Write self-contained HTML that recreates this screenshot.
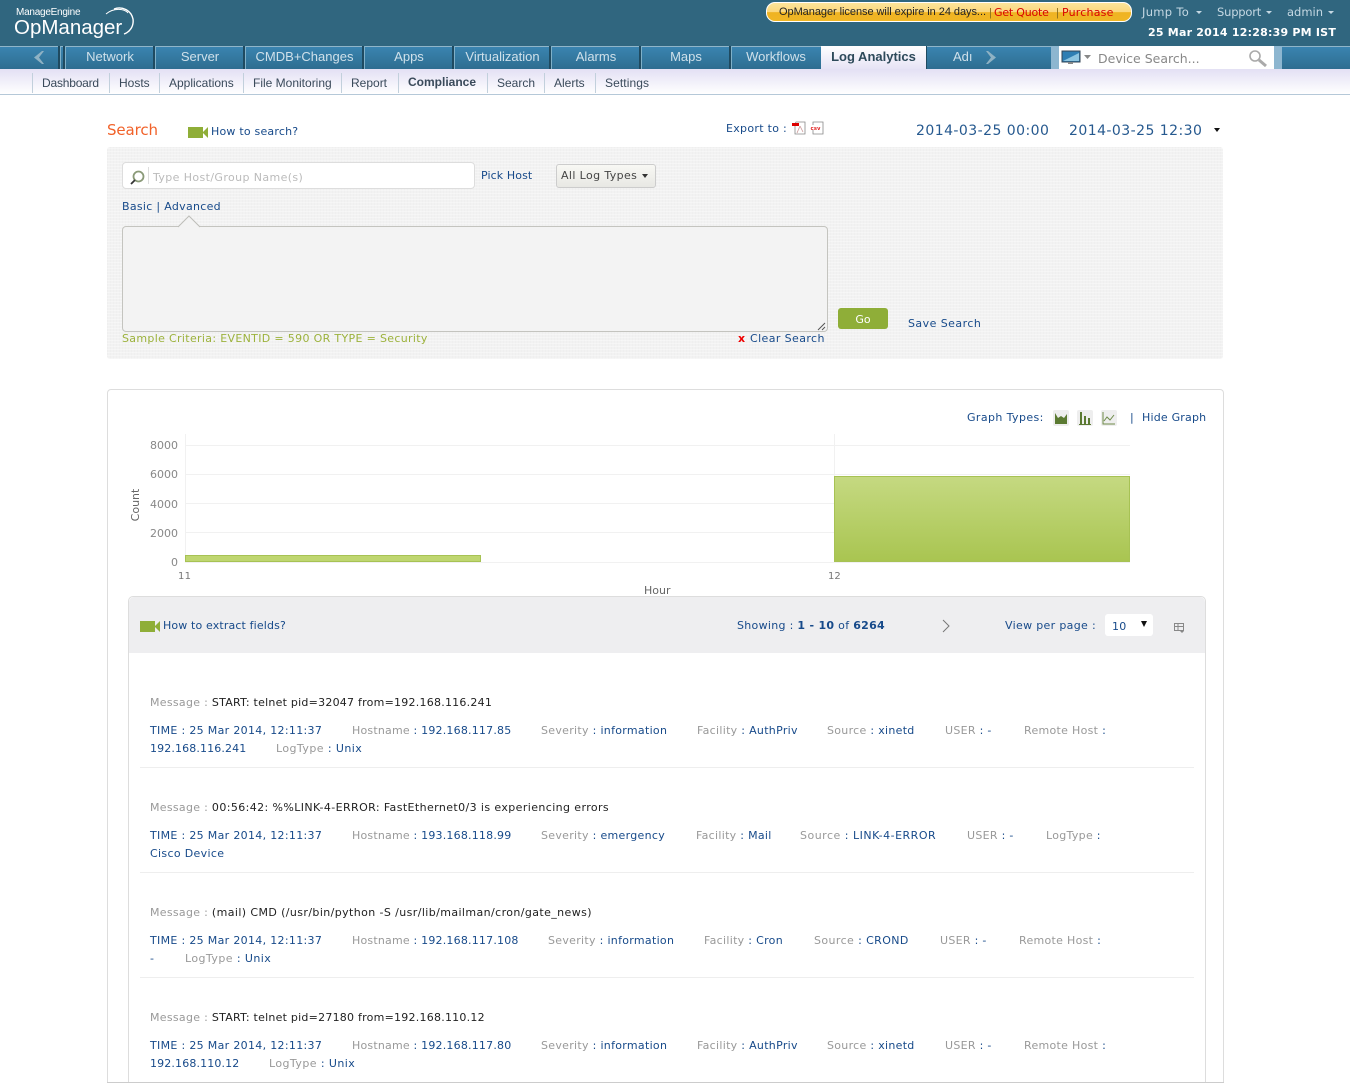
<!DOCTYPE html>
<html><head><meta charset="utf-8"><title>OpManager - Log Analytics</title>
<style>
html,body{margin:0;padding:0;background:#fff}
#p{position:relative;width:1350px;height:1090px;overflow:hidden;background:#fff;font-family:"DejaVu Sans","Liberation Sans",sans-serif;font-size:11px;color:#174a8a}
#p div,#p span.a{position:absolute}
.t{white-space:nowrap;line-height:14px;height:14px;margin-top:1px;letter-spacing:.3px}
.z{letter-spacing:0}
.h{letter-spacing:.2px}
.n{font-family:"Liberation Sans",sans-serif;font-size:13px;color:#cfe0ea;text-align:center;top:49px;line-height:16px;white-space:nowrap}
.s{font-family:"Liberation Sans",sans-serif;font-size:12px;color:#3a4a5a;top:76px;line-height:14px;white-space:nowrap}
.sep{top:46px;width:2px;height:23px;background:#1f4a60;border-right:1px solid #7fb0c8}
.ss{top:73px;width:1px;height:20px;background:#c2d0dc}
.g{color:#999}
.m{color:#222}
.gl{background:#f1f1f1;height:1px}
.ax{color:#888;font-size:11px;text-align:right;width:40px;left:138px;letter-spacing:0}
.cam{width:15px;height:11px;background:#8fae38}
.cam:after{content:"";position:absolute;left:15px;top:0;border-right:5px solid #8fae38;border-top:5px solid transparent;border-bottom:5px solid transparent;height:1px}
.rowl{left:140px;width:1054px;height:1px;background:#eee}
</style></head><body><div id="p">

<div style="left:0;top:0;width:1350px;height:46px;background:#30667f"></div>
<div class="t z" style="left:16px;top:5px;font-family:'Liberation Sans',sans-serif;font-size:10px;color:#fff;letter-spacing:-.25px">ManageEngine</div>
<div class="t z" style="left:14px;top:15px;font-family:'Liberation Sans',sans-serif;font-size:20.5px;color:#fff;line-height:24px;height:24px">OpManager</div>
<svg style="position:absolute;left:100px;top:5px" width="38" height="34" fill="none" stroke="#fff"><path d="M6 9C13 3 24 3 28 8" stroke-width="1"/><path d="M14 4C22 1 31 5 33 14C34 21 30 27 24 29" stroke-width="1.4"/></svg>

<div style="left:766px;top:2px;width:364px;height:18px;border:1px solid #fff;border-radius:9px;background:linear-gradient(#fde49a 0,#fbd77c 50%,#efb322 52%,#f0b625 100%)"></div>
<div class="t" style="left:779px;top:4px;font-family:'Liberation Sans',sans-serif;font-size:11px;color:#222;letter-spacing:-.05px">OpManager license will expire in 24 days...</div>
<div class="t z" style="left:989px;top:5px;color:#8a6d1a;font-family:'Liberation Sans',sans-serif">|</div>
<div class="t" style="left:994px;top:5px;color:#d90000;font-size:11px;letter-spacing:-.2px">Get Quote</div>
<div class="t z" style="left:1056px;top:5px;color:#8a6d1a;font-family:'Liberation Sans',sans-serif">|</div>
<div class="t" style="left:1062px;top:5px;color:#d90000;font-size:11px;letter-spacing:.2px">Purchase</div>

<div class="t" style="left:1142px;top:4px;color:#c5d8e3;font-family:'DejaVu Sans';font-size:11.5px">Jump To</div>
<div style="left:1196px;top:11px;border:3px solid transparent;border-top:3px solid #c5d8e3"></div>
<div class="t" style="left:1217px;top:4px;color:#c5d8e3;font-size:11.5px;letter-spacing:-.2px">Support</div>
<div style="left:1266px;top:11px;border:3px solid transparent;border-top:3px solid #c5d8e3"></div>
<div class="t z" style="left:1287px;top:4px;color:#c5d8e3;font-size:11.5px">admin</div>
<div style="left:1328px;top:11px;border:3px solid transparent;border-top:3px solid #c5d8e3"></div>
<div class="t" style="left:1148px;top:25px;color:#fff;font-weight:bold;font-size:11px;letter-spacing:.22px">25 Mar 2014 12:28:39 PM IST</div>

<div style="left:0;top:46px;width:1350px;height:23px;background:linear-gradient(#3a84b0,#2e6d90);border-top:1px solid #8fb5c9;box-sizing:border-box"></div>
<svg style="position:absolute;left:31px;top:50px" width="14" height="15"><path d="M11 1L3 7.5L11 14L13 14L8 7.5L13 1Z" fill="#8fb2c4"/></svg>
<div class="sep" style="left:58px"></div><div class="sep" style="left:63px"></div>
<div class="sep" style="left:153px"></div><div class="sep" style="left:243px"></div><div class="sep" style="left:362px"></div><div class="sep" style="left:452px"></div><div class="sep" style="left:549px"></div><div class="sep" style="left:639px"></div><div class="sep" style="left:729px"></div>
<div class="n" style="left:66px;width:88px">Network</div>
<div class="n" style="left:156px;width:88px">Server</div>
<div class="n" style="left:246px;width:117px">CMDB+Changes</div>
<div class="n" style="left:365px;width:88px">Apps</div>
<div class="n" style="left:455px;width:95px">Virtualization</div>
<div class="n" style="left:552px;width:88px">Alarms</div>
<div class="n" style="left:642px;width:88px">Maps</div>
<div class="n" style="left:732px;width:88px">Workflows</div>
<div style="left:821px;top:46px;width:105px;height:23px;background:linear-gradient(#fff,#e6e3f5);border-right:1px solid #1f4a60"></div>
<div class="n" style="left:821px;width:105px;color:#2d4a5a;font-weight:bold">Log Analytics</div>
<div class="n" style="left:953px;width:20px;text-align:left;overflow:hidden">Adı</div>
<svg style="position:absolute;left:985px;top:50px" width="14" height="15"><path d="M3 1L11 7.5L3 14L1 14L6 7.5L1 1Z" fill="#8fb2c4"/></svg>
<div style="left:1051px;top:46px;width:8px;height:23px;background:#8db6d0"></div>
<div style="left:1059px;top:46px;width:215px;height:23px;background:#fff"></div>
<div style="left:1274px;top:46px;width:8px;height:23px;background:#8db6d0"></div>
<svg style="position:absolute;left:1061px;top:50px" width="32" height="16"><rect x="1" y="1" width="18" height="11" fill="#2e7eb3" stroke="#345"/><path d="M2 11L18 3V11Z" fill="#8cc4e0"/><rect x="7" y="12" width="5" height="2" fill="#888"/><path d="M23 5H30L26.500 9Z" fill="#888"/></svg>
<div class="t z" style="left:1098px;top:51px;color:#888;font-size:12.5px">Device Search...</div>
<svg style="position:absolute;left:1248px;top:49px" width="20" height="18" fill="none" stroke="#aaa"><circle cx="7" cy="7" r="5" stroke-width="1.6"/><path d="M11 11L18 17" stroke-width="3"/></svg>

<div style="left:0;top:69px;width:1350px;height:25px;background:linear-gradient(#e3e0f4,#fff)"></div>
<div style="left:0;top:94px;width:1350px;height:1px;background:#b5c8d8"></div>
<div class="ss" style="left:32px"></div><div class="ss" style="left:109px"></div><div class="ss" style="left:159px"></div><div class="ss" style="left:243px"></div><div class="ss" style="left:341px"></div><div class="ss" style="left:398px"></div><div class="ss" style="left:487px"></div><div class="ss" style="left:544px"></div><div class="ss" style="left:595px"></div>
<div class="s" style="left:42px;letter-spacing:-.2px">Dashboard</div>
<div class="s" style="left:119px">Hosts</div>
<div class="s" style="left:169px">Applications</div>
<div class="s" style="left:253px">File Monitoring</div>
<div class="s" style="left:351px">Report</div>
<div class="s" style="left:408px;font-weight:bold;top:75px">Compliance</div>
<div class="s" style="left:497px">Search</div>
<div class="s" style="left:554px">Alerts</div>
<div class="s" style="left:605px;letter-spacing:.1px">Settings</div>

<div class="t z" style="left:107px;top:120px;color:#f1622a;font-size:15px;line-height:18px;height:18px;letter-spacing:-.1px">Search</div>
<div class="cam" style="left:188px;top:127px"></div>
<div class="t" style="left:211px;top:124px;letter-spacing:.21px">How to search?</div>
<div class="t" style="left:726px;top:121px">Export to :</div>
<svg style="position:absolute;left:792px;top:121px" width="34" height="14"><path d="M4 1H13V13H3V3Z" fill="#fff" stroke="#888" stroke-width=".8"/><rect x="0" y="2" width="7" height="3" fill="#d00"/><path d="M8 5L5 12M8 5L11 11" stroke="#c99" fill="none" stroke-width=".8"/><path d="M21 1H31V13H21Z" fill="#fff" stroke="#888" stroke-width=".8"/><rect x="18" y="4" width="11" height="5" fill="#fff"/><text x="18.500" y="9" font-size="5.500" font-family="Liberation Mono" font-weight="bold" fill="#d00">csv</text></svg>
<div class="t" style="left:916px;top:122px;font-size:14px;line-height:16px;height:16px;color:#26598f;letter-spacing:.45px">2014-03-25 00:00</div>
<div class="t" style="left:1069px;top:122px;font-size:14px;line-height:16px;height:16px;color:#26598f;letter-spacing:.45px">2014-03-25 12:30</div>
<div style="left:1214px;top:128px;border:3.500px solid transparent;border-top:4px solid #111"></div>

<div style="left:107px;top:147px;width:1116px;height:212px;background-color:#f2f2f2;background-image:repeating-linear-gradient(0deg,rgba(255,255,255,.35) 0 1px,transparent 1px 3px),repeating-linear-gradient(90deg,rgba(0,0,0,.012) 0 1px,transparent 1px 3px);border-radius:3px"></div>
<div style="left:122px;top:162px;width:351px;height:25px;background:#fff;border:1px solid #ddd;border-radius:4px"></div>
<svg style="position:absolute;left:129px;top:169px" width="18" height="18" fill="none"><circle cx="9.500" cy="7.500" r="5" stroke="#8a9a78" stroke-width="1.800"/><path d="M6 11L2 15" stroke="#333" stroke-width="1.800"/></svg>
<div style="left:148px;top:167px;width:1px;height:17px;background:#ddd"></div>
<div class="t" style="left:153px;top:170px;color:#bbb;letter-spacing:.39px">Type Host/Group Name(s)</div>
<div class="t" style="left:481px;top:168px;letter-spacing:.1px">Pick Host</div>
<div style="left:556px;top:164px;width:98px;height:22px;border:1px solid #ccc;border-radius:3px;background:linear-gradient(#f8f8f4,#e8e8e4)"></div>
<div class="t" style="left:561px;top:168px;color:#444;letter-spacing:.38px">All Log Types</div>
<div style="left:642px;top:174px;border:3.500px solid transparent;border-top:4px solid #333"></div>
<div class="t" style="left:122px;top:199px">Basic | Advanced</div>

<div style="left:122px;top:226px;width:704px;height:104px;background:#f3f3f3;border:1px solid #c4c4bf;border-radius:4px"></div>
<svg style="position:absolute;left:178px;top:215px" width="22" height="13"><path d="M0 12L11 1L22 12" fill="#f3f3f3" stroke="#bdbdb8"/><rect x="1" y="12" width="20" height="1" fill="#f3f3f3"/></svg>
<svg style="position:absolute;left:817px;top:322px" width="9" height="9" stroke="#555" fill="none"><path d="M1 8L8 1M5 8L8 5"/></svg>
<div class="t" style="left:122px;top:331px;color:#9cb23c;letter-spacing:.33px">Sample Criteria: EVENTID = 590 OR TYPE = Security</div>
<div class="t" style="left:738px;top:331px;color:#e00;font-weight:bold">x</div>
<div class="t" style="left:750px;top:331px;letter-spacing:.4px">Clear Search</div>
<div style="left:838px;top:308px;width:50px;height:21px;background:#8fae38;border-radius:3px;color:#fff;text-align:center;line-height:23px">Go</div>
<div class="t" style="left:908px;top:316px;letter-spacing:.45px">Save Search</div>

<div style="left:107px;top:389px;width:1115px;height:693px;border:1px solid #ddd;border-bottom:1px solid #ccc;border-radius:4px 4px 0 0"></div>

<div class="t" style="left:967px;top:410px;letter-spacing:.4px">Graph Types:</div>
<svg style="position:absolute;left:1053px;top:410px" width="64" height="16"><rect width="16" height="16" rx="2" fill="#eee"/><rect x="24" width="16" height="16" rx="2" fill="#eee"/><rect x="48" width="16" height="16" rx="2" fill="#eee"/><path d="M2 3L5 8L8 6L11 8L14 4V14H2Z" fill="#5b7a32"/><path d="M27 2H29V14H27ZM31 6H33V14H31ZM35 8H37V14H35Z" fill="#5b7a32"/><path d="M26 14.500H38" stroke="#5b7a32"/><path d="M50 2V14H62M51 11L54 7L57 10L61 5" stroke="#6d8a48" fill="none"/></svg>
<div class="t" style="left:1130px;top:410px">|</div>
<div class="t" style="left:1142px;top:410px;letter-spacing:.2px">Hide Graph</div>

<div class="gl" style="left:185px;top:445px;width:945px"></div>
<div class="gl" style="left:185px;top:474px;width:945px"></div>
<div class="gl" style="left:185px;top:503px;width:945px"></div>
<div class="gl" style="left:185px;top:532px;width:945px"></div>
<div class="gl" style="left:185px;top:562px;width:945px"></div>
<div style="left:185px;top:434px;width:1px;height:128px;background:#f1f1f1"></div>
<div style="left:834px;top:434px;width:1px;height:128px;background:#f1f1f1"></div>
<div class="t ax" style="top:438px">8000</div>
<div class="t ax" style="top:467px">6000</div>
<div class="t ax" style="top:497px">4000</div>
<div class="t ax" style="top:526px">2000</div>
<div class="t ax" style="top:555px">0</div>
<div class="t" style="left:178px;top:569px;color:#777;font-size:10px">11</div>
<div class="t z" style="left:828px;top:569px;color:#777;font-size:10px">12</div>
<div class="t z" style="left:644px;top:583px;color:#666">Hour</div>
<div class="t z" style="left:118px;top:497px;color:#666;width:36px;text-align:center;transform:rotate(-90deg)">Count</div>
<div style="left:185px;top:555px;width:296px;height:7px;background:#bfd670;border:1px solid #a7c254;box-sizing:border-box"></div>
<div style="left:834px;top:476px;width:296px;height:86px;background:linear-gradient(#c5d981,#a9c551);border:1px solid #a7c254;box-sizing:border-box"></div>

<div style="left:128px;top:596px;width:1076px;height:490px;border:1px solid #ddd;border-radius:5px 5px 0 0"></div>
<div style="left:129px;top:597px;width:1076px;height:56px;background:#eeeef0;border-radius:5px 5px 0 0"></div>
<div class="cam" style="left:140px;top:621px"></div>
<div class="t" style="left:163px;top:618px;letter-spacing:.14px">How to extract fields?</div>
<div class="t" style="left:737px;top:618px">Showing : <b>1 - 10</b> of <b>6264</b></div>
<svg style="position:absolute;left:941px;top:619px" width="10" height="14" fill="none" stroke="#777"><path d="M2 1L8 7L2 13"/></svg>
<div class="t" style="left:1005px;top:618px;letter-spacing:.33px">View per page :</div>
<div style="left:1105px;top:614px;width:48px;height:22px;background:#fff;border-radius:3px"></div>
<div class="t" style="left:1112px;top:619px">10</div>
<div style="left:1141px;top:621px;border:3.500px solid transparent;border-top:6px solid #111"></div>
<svg style="position:absolute;left:1174px;top:623px" width="11" height="10" fill="none" stroke="#888"><path d="M.5 .5H9.500V7.500H.5ZM.5 3.500H9.500M4 .5V7.500"/><path d="M6 8H10L8 10Z" fill="#888" stroke="none"/></svg>

<!-- row 1 -->
<div class="t g" style="left:150px;top:695px">Message : <span class="m" style="letter-spacing:.24px">START: telnet pid=32047 from=192.168.116.241</span></div>
<div class="t" style="left:150px;top:723px;letter-spacing:.32px">TIME : 25 Mar 2014, 12:11:37</div>
<div class="t h" style="left:352px;top:723px"><span class="g">Hostname</span> : 192.168.117.85</div>
<div class="t" style="left:541px;top:723px"><span class="g">Severity</span> : information</div>
<div class="t" style="left:697px;top:723px"><span class="g">Facility</span> : AuthPriv</div>
<div class="t" style="left:827px;top:723px"><span class="g">Source</span> : xinetd</div>
<div class="t" style="left:945px;top:723px"><span class="g">USER</span> : -</div>
<div class="t" style="left:1024px;top:723px"><span class="g">Remote Host</span> :</div>
<div class="t" style="left:150px;top:741px;letter-spacing:.13px">192.168.116.241</div>
<div class="t" style="left:276px;top:741px;letter-spacing:.43px"><span class="g">LogType</span> : Unix</div>
<div class="rowl" style="top:767px"></div>

<!-- row 2 -->
<div class="t g" style="left:150px;top:800px">Message : <span class="m" style="letter-spacing:.4px">00:56:42: %%LINK-4-ERROR: FastEthernet0/3 is experiencing errors</span></div>
<div class="t" style="left:150px;top:828px;letter-spacing:.32px">TIME : 25 Mar 2014, 12:11:37</div>
<div class="t h" style="left:352px;top:828px"><span class="g">Hostname</span> : 193.168.118.99</div>
<div class="t" style="left:541px;top:828px"><span class="g">Severity</span> : emergency</div>
<div class="t" style="left:696px;top:828px"><span class="g">Facility</span> : Mail</div>
<div class="t" style="left:800px;top:828px;letter-spacing:.5px"><span class="g">Source</span> : LINK-4-ERROR</div>
<div class="t" style="left:967px;top:828px"><span class="g">USER</span> : -</div>
<div class="t" style="left:1046px;top:828px"><span class="g">LogType</span> :</div>
<div class="t" style="left:150px;top:846px;letter-spacing:.33px">Cisco Device</div>
<div class="rowl" style="top:872px"></div>

<!-- row 3 -->
<div class="t g" style="left:150px;top:905px">Message : <span class="m" style="letter-spacing:.4px">(mail) CMD (/usr/bin/python -S /usr/lib/mailman/cron/gate_news)</span></div>
<div class="t" style="left:150px;top:933px;letter-spacing:.32px">TIME : 25 Mar 2014, 12:11:37</div>
<div class="t h" style="left:352px;top:933px"><span class="g">Hostname</span> : 192.168.117.108</div>
<div class="t" style="left:548px;top:933px"><span class="g">Severity</span> : information</div>
<div class="t" style="left:704px;top:933px"><span class="g">Facility</span> : Cron</div>
<div class="t" style="left:814px;top:933px;letter-spacing:.4px"><span class="g">Source</span> : CROND</div>
<div class="t" style="left:940px;top:933px"><span class="g">USER</span> : -</div>
<div class="t" style="left:1019px;top:933px"><span class="g">Remote Host</span> :</div>
<div class="t" style="left:150px;top:951px">-</div>
<div class="t" style="left:185px;top:951px;letter-spacing:.43px"><span class="g">LogType</span> : Unix</div>
<div class="rowl" style="top:977px"></div>

<!-- row 4 -->
<div class="t g" style="left:150px;top:1010px">Message : <span class="m" style="letter-spacing:.24px">START: telnet pid=27180 from=192.168.110.12</span></div>
<div class="t" style="left:150px;top:1038px;letter-spacing:.32px">TIME : 25 Mar 2014, 12:11:37</div>
<div class="t h" style="left:352px;top:1038px"><span class="g">Hostname</span> : 192.168.117.80</div>
<div class="t" style="left:541px;top:1038px"><span class="g">Severity</span> : information</div>
<div class="t" style="left:697px;top:1038px"><span class="g">Facility</span> : AuthPriv</div>
<div class="t" style="left:827px;top:1038px"><span class="g">Source</span> : xinetd</div>
<div class="t" style="left:945px;top:1038px"><span class="g">USER</span> : -</div>
<div class="t" style="left:1024px;top:1038px"><span class="g">Remote Host</span> :</div>
<div class="t" style="left:150px;top:1056px;letter-spacing:.14px">192.168.110.12</div>
<div class="t" style="left:269px;top:1056px;letter-spacing:.43px"><span class="g">LogType</span> : Unix</div>

<div style="left:107px;top:1082px;width:1117px;height:1px;background:#ccc"></div>
<div style="left:0;top:1083px;width:1350px;height:7px;background:#fff"></div>
</div></body></html>
